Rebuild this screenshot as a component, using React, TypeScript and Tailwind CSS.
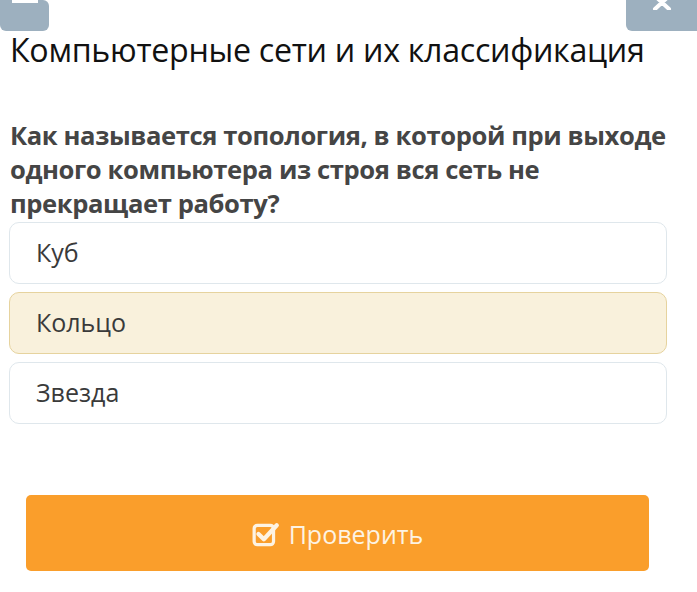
import { useState } from "react";

const options = ["Куб", "Кольцо", "Звезда"];

export default function App() {
  const [selected, setSelected] = useState(1);

  return (
    <div
      className="relative w-[697px] h-[592px] bg-white overflow-hidden"
      style={{ fontFamily: '"Open Sans", "Noto Sans", sans-serif' }}
    >
      {/* top bar buttons */}
      <div className="flex justify-between">
        <button className="w-[49px] h-[31px] bg-[#9db0bf] rounded-b-[6px] rounded-tr-[6px] flex justify-center">
          <span className="block w-[26px] h-[4px] bg-white mt-[-1px]" />
        </button>
        <button className="w-[71px] h-[31px] bg-[#9db0bf] rounded-bl-[6px] flex justify-center">
          <svg width="22" height="14" viewBox="0 0 22 14" className="mt-[-4px]">
            <path d="M4 0 L18 13 M18 0 L4 13" stroke="white" strokeWidth="4" strokeLinecap="round" />
          </svg>
        </button>
      </div>

      <h1 className="px-[10px] mt-[1px] text-[32.2px] leading-[36px] text-[#111] font-normal tracking-[-0.3px]">
        Компьютерные сети и их классификация
      </h1>

      <p className="px-[10px] mt-[51px] text-[25.6px] leading-[34px] font-bold text-[#454545] tracking-[-0.4px] w-[690px]">
        Как называется топология, в которой при выходе одного компьютера из строя вся сеть не
        прекращает работу?
      </p>

      <div className="ml-[9px] w-[658px] mt-[1px] flex flex-col gap-[8px]">
        {options.map((o, i) => (
          <button
            key={o}
            onClick={() => setSelected(i)}
            className={
              "h-[62px] rounded-[10px] border text-left pl-[26px] text-[25px] text-[#3a3a3a] " +
              (selected === i
                ? "bg-[#f9f1dc] border-[#e6d39e]"
                : "bg-white border-[#dfe7ec]")
            }
          >
            {o}
          </button>
        ))}
      </div>

      <button className="ml-[26px] mt-[71px] w-[623px] h-[76px] rounded-[5px] bg-[#fa9e2b] flex items-center justify-center gap-[9px] pt-[3px] text-[25px] text-[#fdf3e3]">
        <svg width="28" height="26" viewBox="0 0 26 24" fill="none">
          <rect x="2" y="3" width="18" height="18" rx="3" stroke="#fdf3e3" strokeWidth="3" />
          <path d="M6 11 L11 16 L23 3" stroke="#fdf3e3" strokeWidth="4" strokeLinecap="round" strokeLinejoin="round" />
        </svg>
        Проверить
      </button>
    </div>
  );
}
